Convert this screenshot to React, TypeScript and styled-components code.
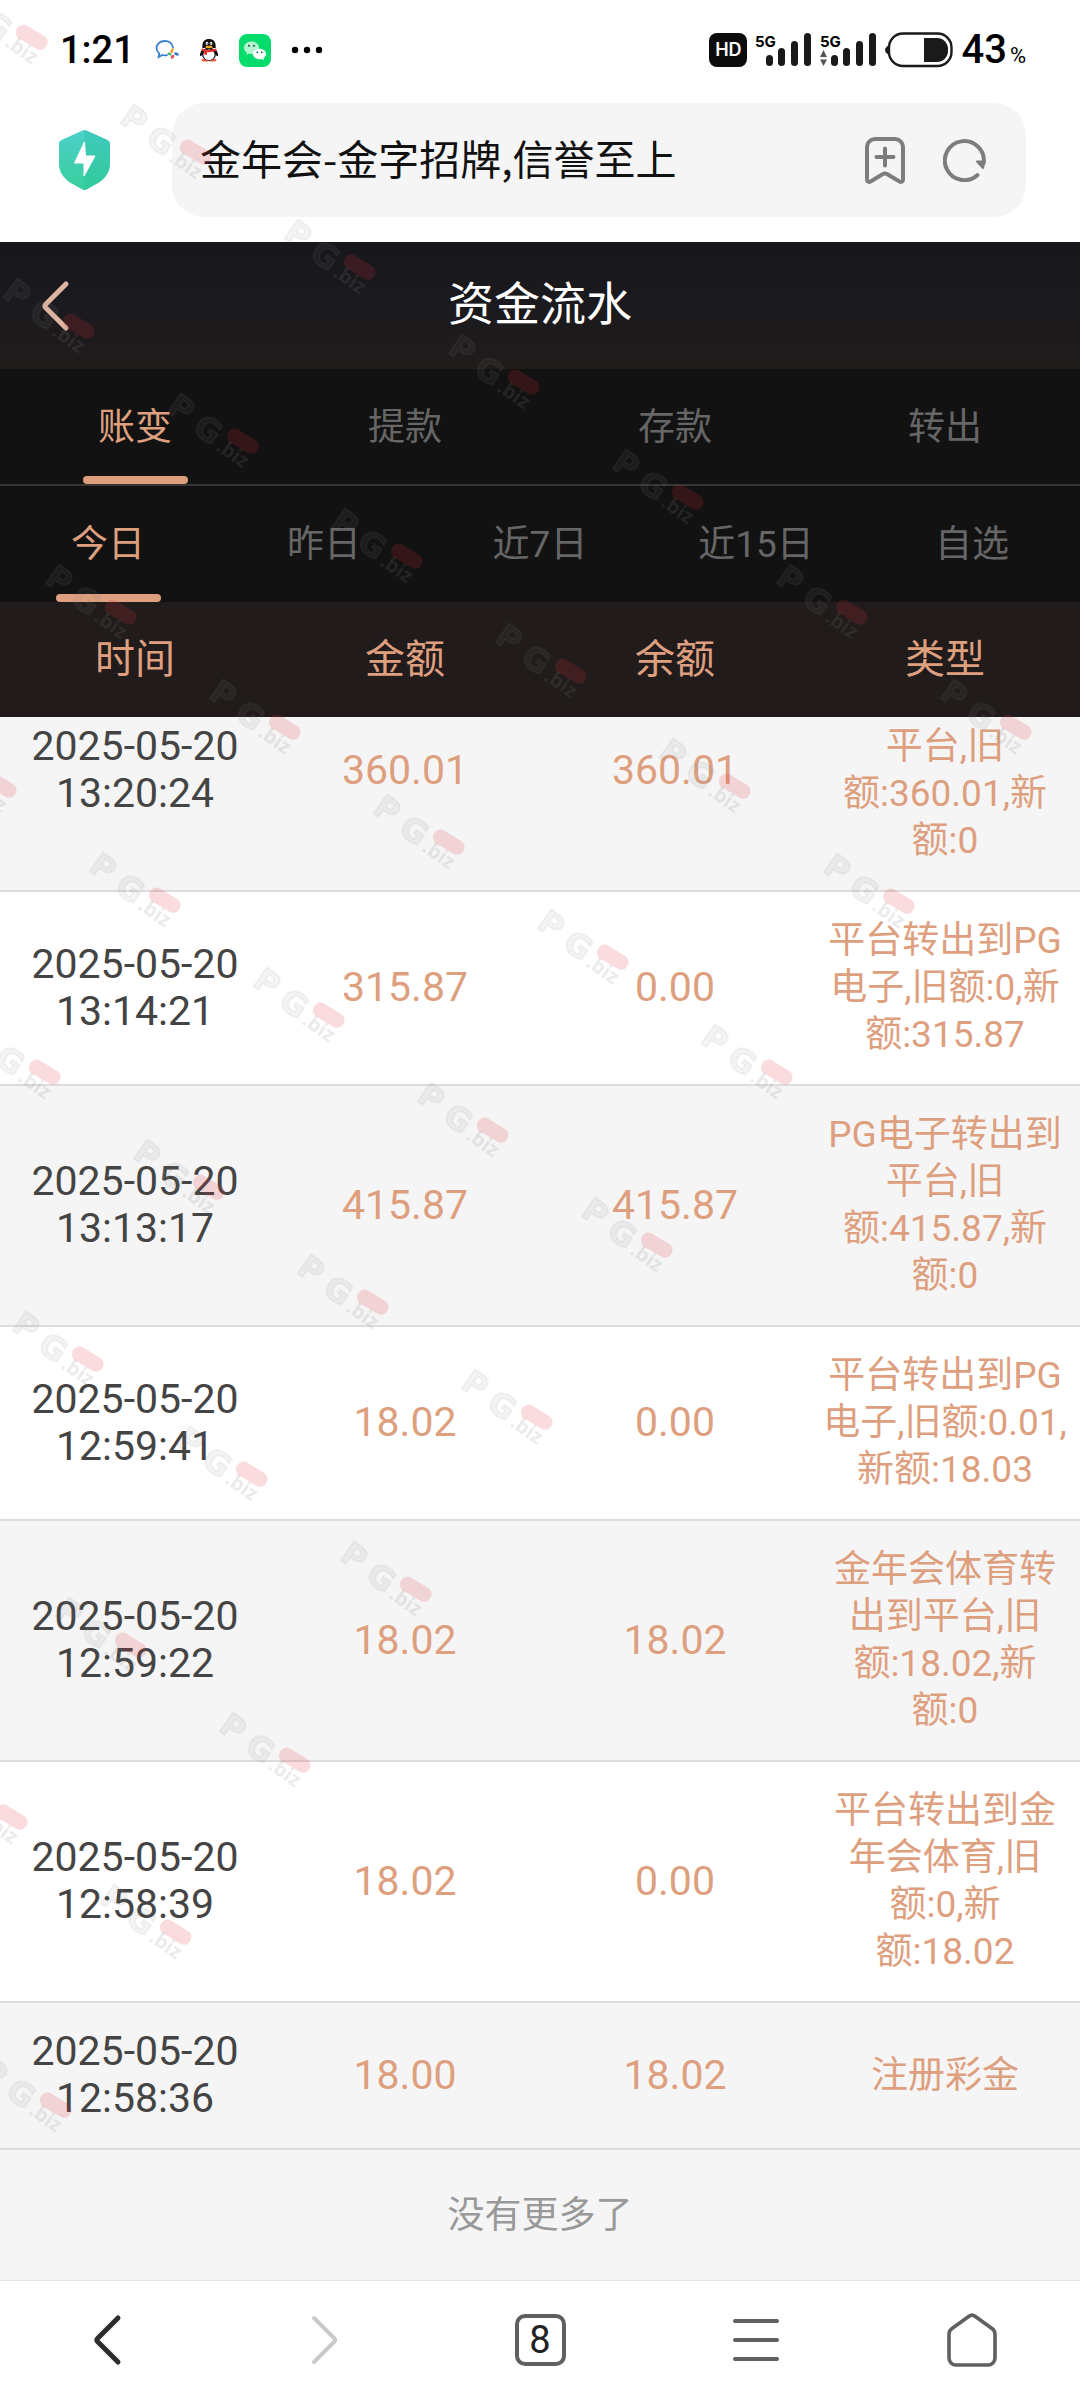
import React, { useLayoutEffect, useRef, useState } from "react";
import styled, { createGlobalStyle } from "styled-components";

const latin = `Roboto, "Noto Sans CJK SC", sans-serif`;
const cjk = `"Noto Sans CJK SC", sans-serif`;
const accent = "#de9f7f";

const GlobalStyle = createGlobalStyle`
  *, *::before, *::after { box-sizing: border-box; }
  html, body, #root { height: 100%; }
  body { margin: 0; background: #fff; font-family: ${latin}; }
  button { border: 0; padding: 0; background: none; font: inherit; color: inherit; cursor: pointer; }
  svg { display: block; flex: none; }
`;

const Screen = styled.div`
  display: flex;
  flex-direction: column;
  height: 100%;
  background: #fff;
`;

/* ---------- system status bar ---------- */

const StatusBar = styled.div`
  display: flex;
  align-items: center;
  justify-content: space-between;
  flex: none;
  height: 100px;
  padding: 0 54px 0 60px;
  color: #000;
`;

const StatusGroup = styled.div<{ $gap: number }>`
  display: flex;
  align-items: center;
  gap: ${(p) => p.$gap}px;
`;

const Clock = styled.time`
  font-size: 38px;
  font-weight: 500;
  line-height: 48px;
`;

const HdBadge = styled.span`
  width: 38px;
  border-radius: 8px;
  background: #0c0c0c;
  color: #fff;
  font: 600 18px/34px Inter, sans-serif;
  text-align: center;
`;

const BatteryLevel = styled.span`
  display: flex;
  align-items: baseline;
  gap: 3px;
  font-size: 40px;
  font-weight: 500;
  line-height: 48px;

  small {
    font-size: 22px;
    font-weight: 400;
    line-height: 24px;
  }
`;

/* ---------- browser chrome ---------- */

const BrowserBar = styled.div`
  display: flex;
  align-items: center;
  flex: none;
  gap: 62px;
  padding: 3px 54px 25px 59px;
`;

const AddressBox = styled.div`
  display: flex;
  align-items: center;
  gap: 38px;
  flex: 1;
  min-width: 0;
  height: 114px;
  padding: 0 40px 0 28px;
  border-radius: 32px;
  background: #f5f5f5;
`;

const AddressInput = styled.input`
  flex: 1;
  min-width: 0;
  height: 60px;
  padding: 0 0 6px;
  border: 0;
  outline: 0;
  background: none;
  color: #111;
  font: 400 41px/54px ${cjk};
`;

const BottomBar = styled.nav`
  display: grid;
  grid-template-columns: repeat(5, 1fr);
  flex: none;
  height: 120px;
  border-top: 1px solid #e4e4e4;
  background: #fff;
`;

const NavButton = styled.button`
  display: grid;
  place-items: center;
  padding-bottom: 2px;
`;

const TabCount = styled.span`
  width: 51px;
  border: 4px solid #606060;
  border-radius: 10px;
  color: #222;
  font-size: 38px;
  line-height: 44px;
  text-align: center;
`;

/* ---------- page ---------- */

const PageHeader = styled.header`
  display: grid;
  grid-template-columns: 1fr auto 1fr;
  align-items: center;
  flex: none;
  height: 127px;
  padding: 0 40px;
  background: linear-gradient(#17171b, #1b1a1e 50%, #211b1a);
`;

const BackButton = styled.button`
  justify-self: start;
`;

const PageTitle = styled.h1`
  margin: 0;
  padding-bottom: 12px;
  color: #fff;
  font: 400 46px/60px ${cjk};
`;

const Tabs = styled.div<{ $divided?: boolean }>`
  display: grid;
  grid-auto-flow: column;
  grid-auto-columns: 1fr;
  flex: none;
  height: ${(p) => (p.$divided ? 117 : 116)}px;
  border-bottom: ${(p) => (p.$divided ? "2px solid #363636" : "0")};
  background: #121212;
`;

const Tab = styled.button`
  display: flex;
  flex-direction: column;
  align-items: center;
  justify-content: space-between;
  padding-top: 32px;
  color: #666;
  font-size: 37px;
  line-height: 54px;

  &::after {
    content: "";
    width: 105px;
    height: 8px;
    border-radius: 4px;
  }

  &[aria-selected="true"] {
    color: ${accent};
  }

  &[aria-selected="true"]::after {
    background: ${accent};
  }
`;

const ScrollArea = styled.main`
  flex: 1;
  min-height: 0;
  overflow-y: auto;
  scrollbar-width: none;
  background: #f5f5f5;
`;

const Ledger = styled.table`
  width: 100%;
  table-layout: fixed;
  border-spacing: 0;
  text-align: center;
`;

const HeadCell = styled.th`
  position: sticky;
  top: 0;
  height: 115px;
  padding: 0 0 8px;
  background: #211b1b;
  color: ${accent};
  font-size: 40px;
  font-weight: 400;
`;

const Row = styled.tr`
  background: #f5f5f5;

  &:nth-child(even) {
    background: #fff;
  }
`;

const Cell = styled.td<{ $kind: "time" | "amount" | "type" }>`
  padding: 25px ${(p) => (p.$kind === "type" ? 11 : 24)}px 26px;
  border-bottom: 2px solid #dcdcdc;
  color: ${(p) => (p.$kind === "time" ? "#444" : accent)};
  font-size: ${(p) => (p.$kind === "type" ? 37 : 41)}px;
  line-height: 47px;
`;

const EndNote = styled.p`
  margin: 0;
  padding: 39px 0 37px;
  color: #999;
  font-size: 37px;
  line-height: 54px;
  text-align: center;
`;

/* ---------- watermark ---------- */

const WatermarkLayer = styled.svg`
  position: fixed;
  inset: 0;
  width: 100%;
  height: 100%;
  pointer-events: none;
`;

const STEP = { x: 164, y: 115 };
const CHAINS = [
  { x: -44, y: -12, count: 7 },
  { x: 3, y: 277, count: 6 },
  { x: 45, y: 563, count: 5 },
  { x: -75, y: 736, count: 5 },
  { x: -31, y: 1023, count: 4 },
  { x: 12, y: 1310, count: 3 },
  { x: 55, y: 1596, count: 2 },
  { x: -64, y: 1768, count: 2 },
  { x: -20, y: 2056, count: 1 },
];

function Mark({ x, y }: { x: number; y: number }) {
  return (
    <g transform={`translate(${x + 13} ${y + 1}) rotate(35)`}>
      <g fill="#808080" fillOpacity="0.09" stroke="#808080" strokeOpacity="0.09" strokeWidth="2" fontFamily="DejaVu Sans, sans-serif" fontWeight="700">
        <text x="-2" y="23" fontSize="32">P</text>
        <text x="31" y="25" fontSize="32">G</text>
      </g>
      <text x="61" y="26" fontSize="20" fill="#808080" fillOpacity="0.16" fontFamily="Open Sans, sans-serif" fontWeight="700">.biz</text>
      <rect x="62" y="-4" width="34" height="15" rx="7" fill="#e0303c" fillOpacity="0.17" transform="rotate(-4 79 3)" />
    </g>
  );
}

function Watermark() {
  return (
    <WatermarkLayer aria-hidden="true">
      {CHAINS.flatMap((c) =>
        Array.from({ length: c.count }, (_, i) => (
          <Mark key={`${c.y}-${i}`} x={c.x + STEP.x * i} y={c.y + STEP.y * i} />
        ))
      )}
    </WatermarkLayer>
  );
}

/* ---------- icons ---------- */

function WeComIcon() {
  return (
    <svg width="24" height="22" viewBox="0 0 24 22" fill="none" strokeLinecap="round">
      <path d="M18 8.500C17.500 4.500 14 2 9.800 2 5.200 2 1.500 5 1.500 9c0 2.300 1 4 2.700 5.400L3.600 18l3.800-2c1.500.4 3 .4 4.600.1" stroke="#3d7fd0" strokeWidth="1.800" />
      <path d="M17.500 10.500l-1 2.500" stroke="#f0a020" strokeWidth="2.400" />
      <path d="M20.500 14.500l2 1" stroke="#3d7fd0" strokeWidth="2.600" />
      <path d="M17 18.500l1-1.500" stroke="#e5483e" strokeWidth="2.600" />
      <path d="M13.500 14.500l2 1" stroke="#45b058" strokeWidth="2" />
    </svg>
  );
}

function PenguinIcon() {
  return (
    <svg width="20" height="24" viewBox="0 0 20 24">
      <ellipse cx="6.500" cy="22" rx="4" ry="1.600" fill="#f0604c" />
      <ellipse cx="13.500" cy="22" rx="4" ry="1.600" fill="#f0604c" />
      <path d="M3.500 11C1.500 13.500.4 16.500 1.200 18c.6.600 1.800-.6 2.400-1.800h12.800c.6 1.200 1.800 2.400 2.400 1.800.8-1.500-.3-4.500-2.300-7z" fill="#111" />
      <ellipse cx="10" cy="16" rx="7" ry="6.600" fill="#111" />
      <ellipse cx="10" cy="16.800" rx="5.600" ry="5.200" fill="#fff" />
      <path d="M3.300 10V8C3.300 3.500 6 1 10 1s6.700 2.500 6.700 7v2z" fill="#111" />
      <ellipse cx="8" cy="5.600" rx="1.300" ry="1.800" fill="#fff" />
      <ellipse cx="12" cy="5.600" rx="1.300" ry="1.800" fill="#fff" />
      <circle cx="8.300" cy="5.900" r=".7" fill="#111" />
      <circle cx="11.700" cy="5.900" r=".7" fill="#111" />
      <ellipse cx="10" cy="9" rx="3.600" ry="1.200" fill="#f7a823" />
      <path d="M2.800 10.300c4.500 2.200 9.900 2.200 14.400 0l.4 2.300c-3 1.500-6.300 1.900-9.600 1.600v2.800l-2.800-.4v-3c-1-.2-1.900-.6-2.800-1z" fill="#e8322e" />
    </svg>
  );
}

function WeChatIcon() {
  return (
    <svg width="32" height="33" viewBox="0 0 32 33">
      <rect width="32" height="33" rx="8" fill="#05dc6c" />
      <path d="M12.500 7.500C8.300 7.500 5 10.200 5 13.700c0 2 1.100 3.700 2.800 4.900L7.200 21l2.700-1.400c.9.200 1.700.3 2.600.3 4.200 0 7.500-2.800 7.500-6.200s-3.300-6.200-7.500-6.200z" fill="#b4f5d0" />
      <path d="M20.500 14.700c-3.600 0-6.500 2.300-6.500 5.300s2.900 5.300 6.500 5.300c.8 0 1.500-.1 2.200-.3l2.300 1.200-.5-2c1.500-1 2.500-2.500 2.500-4.200 0-3-2.900-5.300-6.500-5.300z" fill="#fff" />
      <g fill="#153">
        <circle cx="10" cy="11.800" r="1" />
        <circle cx="15" cy="11.800" r="1" />
        <circle cx="18.300" cy="18.300" r=".9" />
        <circle cx="22.700" cy="18.300" r=".9" />
      </g>
    </svg>
  );
}

function MoreDots() {
  return (
    <svg width="32" height="8" viewBox="0 0 32 8">
      <circle cx="4" cy="4" r="3.200" />
      <circle cx="16" cy="4" r="3.200" />
      <circle cx="28" cy="4" r="3.200" />
    </svg>
  );
}

function SignalIcon({ traffic = false }: { traffic?: boolean }) {
  return (
    <svg width="57" height="34" viewBox="0 0 57 34" fill="#1a1a1a">
      <text x="0" y="14" fontSize="15" fontWeight="700" fontFamily="Inter, sans-serif" fill="#000">5G</text>
      <rect x="11" y="22" width="7" height="11" rx="3.500" />
      <rect x="23" y="15" width="7" height="18" rx="3.500" />
      <rect x="36" y="8" width="7" height="25" rx="3.500" />
      <rect x="49" y="0" width="7" height="33" rx="3.500" />
      {traffic && <path d="M0 24l3.500-7 3.500 7zM0 26.500h7l-3.500 6.500z" fill="#555" />}
    </svg>
  );
}

function BatteryIcon() {
  return (
    <svg width="68" height="36" viewBox="0 0 68 36">
      <path d="M4 13C2 14 0 16 0 18s2 4 4 5z" fill="#1a1a1a" />
      <rect x="4" y="1.500" width="62.500" height="32.500" rx="14" fill="none" stroke="#1a1a1a" strokeWidth="2.400" />
      <path d="M39 6h13a11 11 0 0 1 11 11v2a11 11 0 0 1-11 11H39z" fill="#1a1a1a" />
    </svg>
  );
}

function ShieldIcon() {
  return (
    <svg width="51" height="60" viewBox="0 0 51 60">
      <defs>
        <linearGradient id="shield" x1="0" y1="0" x2="0" y2="1">
          <stop offset="0" stopColor="#4ccfc9" />
          <stop offset="1" stopColor="#38cf9b" />
        </linearGradient>
      </defs>
      <path d="M23.500.6a4 4 0 0 1 4 0l21 9.400A4 4 0 0 1 51 13.600V34c0 8-4.500 14-11 18.500l-12.500 7a4 4 0 0 1-4 0L11 52.500C4.500 48 0 42 0 34V13.600A4 4 0 0 1 2.500 10z" fill="url(#shield)" />
      <path d="M25.500 0a4 4 0 0 1 2 .6l21 9.400A4 4 0 0 1 51 13.600V34c0 8-4.500 14-11 18.500l-12.500 7a4 4 0 0 1-2 .5z" fill="#1fbf9d" fillOpacity=".28" />
      <path d="M25.500 12L15.500 33h9.500L25 46 36 26h-9.500z" fill="#fff" stroke="#fff" strokeWidth="1" strokeLinejoin="round" />
    </svg>
  );
}

function BookmarkIcon() {
  return (
    <svg width="40" height="47" viewBox="0 0 40 47" fill="none" stroke="#7d7d7d" strokeWidth="4" strokeLinecap="round" strokeLinejoin="round">
      <path d="M10 2h20a8 8 0 0 1 8 8v32.500c0 2-1.800 3-3.500 2L22 37a4 4 0 0 0-4 0L5.500 44.500c-1.700 1-3.500 0-3.500-2V10a8 8 0 0 1 8-8z" />
      <path d="M20 11.500v17M11.500 20h17" />
    </svg>
  );
}

function ReloadIcon() {
  return (
    <svg width="43" height="44" viewBox="0 0 43 44" fill="none" stroke="#7d7d7d" strokeWidth="4" strokeLinecap="round">
      <path d="M34.500 37A19.500 19.500 0 1 1 40.700 25" />
      <path d="M34 23.500h7.500l-1.500 6.500z" fill="#7d7d7d" strokeWidth="2" strokeLinejoin="round" />
    </svg>
  );
}

function Chevron({ dir, color, width }: { dir: "left" | "right"; color: string; width: number }) {
  return (
    <svg width="32" height="52" viewBox="0 0 32 52" fill="none" stroke={color} strokeWidth={width} strokeLinecap="round" strokeLinejoin="round">
      <path d={dir === "left" ? "M26 4L5.500 24.500a2 2 0 0 0 0 3L26 48" : "M6 4l20.500 20.500a2 2 0 0 1 0 3L6 48"} />
    </svg>
  );
}

function MenuIcon() {
  return (
    <svg width="46" height="44" viewBox="0 0 46 44" stroke="#606060" strokeWidth="4" strokeLinecap="round">
      <path d="M2 3h42M2 22h42M2 41h42" />
    </svg>
  );
}

function HomeIcon() {
  return (
    <svg width="50" height="54" viewBox="0 0 50 54" fill="none" stroke="#606060" strokeWidth="3.600" strokeLinejoin="round">
      <path d="M22 3.200a5 5 0 0 1 6 0L45 15.500a7 7 0 0 1 3 5.500v24a7 7 0 0 1-7 7H9a7 7 0 0 1-7-7V21a7 7 0 0 1 3-5.500z" />
    </svg>
  );
}

/* ---------- data ---------- */

const KINDS = ["账变", "提款", "存款", "转出"];
const RANGES = ["今日", "昨日", "近7日", "近15日", "自选"];
const COLUMNS = ["时间", "金额", "余额", "类型"];

const RECORDS = [
  { date: "2025-05-20", time: "13:20:24", amount: "360.01", balance: "360.01", type: "PG电子转出到平台,旧额:360.01,新额:0" },
  { date: "2025-05-20", time: "13:14:21", amount: "315.87", balance: "0.00", type: "平台转出到PG电子,旧额:0,新额:315.87" },
  { date: "2025-05-20", time: "13:13:17", amount: "415.87", balance: "415.87", type: "PG电子转出到平台,旧额:415.87,新额:0" },
  { date: "2025-05-20", time: "12:59:41", amount: "18.02", balance: "0.00", type: "平台转出到PG电子,旧额:0.01,新额:18.03" },
  { date: "2025-05-20", time: "12:59:22", amount: "18.02", balance: "18.02", type: "金年会体育转出到平台,旧额:18.02,新额:0" },
  { date: "2025-05-20", time: "12:58:39", amount: "18.02", balance: "0.00", type: "平台转出到金年会体育,旧额:0,新额:18.02" },
  { date: "2025-05-20", time: "12:58:36", amount: "18.00", balance: "18.02", type: "注册彩金" },
];

export default function App() {
  const [kind, setKind] = useState(KINDS[0]);
  const [range, setRange] = useState(RANGES[0]);
  const list = useRef<HTMLElement>(null);

  // The list opens scrolled to its end.
  useLayoutEffect(() => {
    if (list.current) list.current.scrollTop = list.current.scrollHeight;
  }, []);

  return (
    <Screen>
      <GlobalStyle />
      <StatusBar>
        <StatusGroup $gap={20}>
          <Clock>1:21</Clock>
          <WeComIcon />
          <PenguinIcon />
          <WeChatIcon />
          <MoreDots />
        </StatusGroup>
        <StatusGroup $gap={8}>
          <HdBadge>HD</HdBadge>
          <SignalIcon />
          <SignalIcon traffic />
          <BatteryIcon />
          <BatteryLevel>
            43<small>%</small>
          </BatteryLevel>
        </StatusGroup>
      </StatusBar>

      <BrowserBar>
        <button aria-label="网站安全">
          <ShieldIcon />
        </button>
        <AddressBox>
          <AddressInput aria-label="地址" defaultValue="金年会-金字招牌,信誉至上" />
          <button aria-label="添加书签">
            <BookmarkIcon />
          </button>
          <button aria-label="刷新">
            <ReloadIcon />
          </button>
        </AddressBox>
      </BrowserBar>

      <PageHeader>
        <BackButton aria-label="返回">
          <Chevron dir="left" color="#dfb5a1" width={5} />
        </BackButton>
        <PageTitle>资金流水</PageTitle>
      </PageHeader>

      <Tabs role="tablist" $divided>
        {KINDS.map((k) => (
          <Tab key={k} role="tab" aria-selected={k === kind} onClick={() => setKind(k)}>
            {k}
          </Tab>
        ))}
      </Tabs>
      <Tabs role="tablist">
        {RANGES.map((r) => (
          <Tab key={r} role="tab" aria-selected={r === range} onClick={() => setRange(r)}>
            {r}
          </Tab>
        ))}
      </Tabs>

      <ScrollArea ref={list}>
        <Ledger>
          <thead>
            <tr>
              {COLUMNS.map((c) => (
                <HeadCell key={c} scope="col">
                  {c}
                </HeadCell>
              ))}
            </tr>
          </thead>
          <tbody>
            {RECORDS.map((r) => (
              <Row key={r.time}>
                <Cell $kind="time">
                  {r.date} {r.time}
                </Cell>
                <Cell $kind="amount">{r.amount}</Cell>
                <Cell $kind="amount">{r.balance}</Cell>
                <Cell $kind="type">{r.type}</Cell>
              </Row>
            ))}
          </tbody>
        </Ledger>
        <EndNote>没有更多了</EndNote>
      </ScrollArea>

      <BottomBar>
        <NavButton aria-label="后退">
          <Chevron dir="left" color="#2c2c2c" width={5} />
        </NavButton>
        <NavButton aria-label="前进">
          <Chevron dir="right" color="#cacaca" width={4} />
        </NavButton>
        <NavButton aria-label="标签页">
          <TabCount>8</TabCount>
        </NavButton>
        <NavButton aria-label="菜单">
          <MenuIcon />
        </NavButton>
        <NavButton aria-label="主页">
          <HomeIcon />
        </NavButton>
      </BottomBar>
      <Watermark />
    </Screen>
  );
}
